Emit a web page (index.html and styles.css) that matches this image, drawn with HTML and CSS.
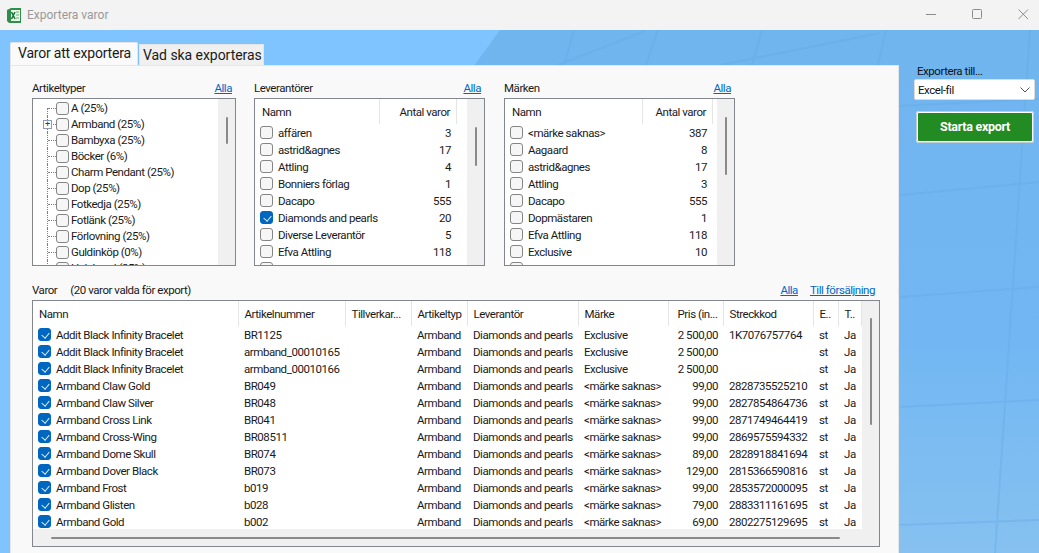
FILE: index.html
```html
<!DOCTYPE html>
<html lang="sv">
<head>
<meta charset="utf-8">
<title>Exportera varor</title>
<link rel="stylesheet" href="styles.css">
</head>
<body>
<div class="window">
  <svg class="wallpaper" width="1039" height="553" viewBox="0 0 1039 553" aria-hidden="true">
    <defs>
      <linearGradient id="wr" x1="0" y1="0" x2="0" y2="1"><stop offset="0" stop-color="#70b5ee"/><stop offset=".6" stop-color="#72b7f3"/><stop offset="1" stop-color="#86c1f0"/></linearGradient>
    </defs>
    <rect width="1039" height="553" fill="#80c4ff"/>
    <polygon points="500,30 1039,30 1039,553 120,553" fill="url(#wr)"/>
    <g class="wl">
      <path d="M574 30L564 65M658 30L646 65M762 30L752 65M886 30L878 65M645 31L558 65M880 33L721 65"/>
      <path d="M1030 30L995 553M900 106L1039 99M900 195L1039 182M900 297L1039 287M900 407L1039 400M900 525L1039 520"/>
    </g>
  </svg>

  <header class="titlebar">
    <svg class="app-icon" width="16" height="17" viewBox="0 0 16 17" aria-hidden="true">
      <path d="M1 3L5 1H15V16H3L1 14Z" fill="#2f8f4a"/>
      <rect x="5" y="3" width="9" height="11" fill="#eef6ee"/>
      <path d="M10 5h3M10 8h3M10 11h3" stroke="#8fc79f" stroke-width="1.5"/>
      <path d="M5.5 5L9 12M9 5L5.5 12" stroke="#1f7a3c" stroke-width="1.6"/>
    </svg>
    <span class="app-title">Exportera varor</span>
    <div class="win-controls">
      <svg width="11" height="11" viewBox="0 0 11 11" aria-hidden="true"><path d="M0 5.5H10" stroke="#8c8c8c"/></svg>
      <svg width="11" height="11" viewBox="0 0 11 11" aria-hidden="true"><rect x=".5" y=".5" width="9" height="9" rx="1" fill="none" stroke="#8c8c8c"/></svg>
      <svg width="11" height="11" viewBox="0 0 11 11" aria-hidden="true"><path d="M.5 .5L10 10M10 .5L.5 10" stroke="#8c8c8c"/></svg>
    </div>
  </header>

  <div class="content">
    <main class="main">
      <nav class="tabs">
        <span class="tab tab-active">Varor att exportera</span>
        <span class="tab">Vad ska exporteras</span>
      </nav>
      <section class="panel">
        <div class="filters">
          <div class="group g-types">
            <div class="group-head"><span>Artikeltyper</span><a class="link">Alla</a></div>
            <div class="box tree-box">
              <ul class="tree">
                <li><span class="branch first"></span><span class="cb"></span><span>A (25%)</span></li>
                <li><span class="branch"><span class="plus">+</span></span><span class="cb"></span><span>Armband (25%)</span></li>
                <li><span class="branch"></span><span class="cb"></span><span>Bambyxa (25%)</span></li>
                <li><span class="branch"></span><span class="cb"></span><span>Böcker (6%)</span></li>
                <li><span class="branch"></span><span class="cb"></span><span>Charm Pendant (25%)</span></li>
                <li><span class="branch"></span><span class="cb"></span><span>Dop (25%)</span></li>
                <li><span class="branch"></span><span class="cb"></span><span>Fotkedja (25%)</span></li>
                <li><span class="branch"></span><span class="cb"></span><span>Fotlänk (25%)</span></li>
                <li><span class="branch"></span><span class="cb"></span><span>Förlovning (25%)</span></li>
                <li><span class="branch"></span><span class="cb"></span><span>Guldinköp (0%)</span></li>
                <li><span class="branch"></span><span class="cb"></span><span>Halsband (25%)</span></li>
              </ul>
              <div class="vscroll"><span class="thumb th-tree"></span></div>
            </div>
          </div>

          <div class="group g-list">
            <div class="group-head"><span>Leverantörer</span><a class="link">Alla</a></div>
            <div class="box">
              <div class="list">
                <div class="list-head"><span class="lh-name">Namn</span><span class="lh-count">Antal varor</span></div>
                <div class="list-row"><span class="cb"></span><span class="ln">affären</span><span class="lc">3</span></div>
                <div class="list-row"><span class="cb"></span><span class="ln">astrid&amp;agnes</span><span class="lc">17</span></div>
                <div class="list-row"><span class="cb"></span><span class="ln">Attling</span><span class="lc">4</span></div>
                <div class="list-row"><span class="cb"></span><span class="ln">Bonniers förlag</span><span class="lc">1</span></div>
                <div class="list-row"><span class="cb"></span><span class="ln">Dacapo</span><span class="lc">555</span></div>
                <div class="list-row"><span class="cb on"></span><span class="ln">Diamonds and pearls</span><span class="lc">20</span></div>
                <div class="list-row"><span class="cb"></span><span class="ln">Diverse Leverantör</span><span class="lc">5</span></div>
                <div class="list-row"><span class="cb"></span><span class="ln">Efva Attling</span><span class="lc">118</span></div>
                <div class="list-row"><span class="cb"></span></div>
              </div>
              <div class="vscroll"><span class="thumb th-lev"></span></div>
            </div>
          </div>

          <div class="group g-list">
            <div class="group-head"><span>Märken</span><a class="link">Alla</a></div>
            <div class="box">
              <div class="list list-wide">
                <div class="list-head"><span class="lh-name">Namn</span><span class="lh-count">Antal varor</span></div>
                <div class="list-row"><span class="cb"></span><span class="ln">&lt;märke saknas&gt;</span><span class="lc">387</span></div>
                <div class="list-row"><span class="cb"></span><span class="ln">Aagaard</span><span class="lc">8</span></div>
                <div class="list-row"><span class="cb"></span><span class="ln">astrid&amp;agnes</span><span class="lc">17</span></div>
                <div class="list-row"><span class="cb"></span><span class="ln">Attling</span><span class="lc">3</span></div>
                <div class="list-row"><span class="cb"></span><span class="ln">Dacapo</span><span class="lc">555</span></div>
                <div class="list-row"><span class="cb"></span><span class="ln">Dopmästaren</span><span class="lc">1</span></div>
                <div class="list-row"><span class="cb"></span><span class="ln">Efva Attling</span><span class="lc">118</span></div>
                <div class="list-row"><span class="cb"></span><span class="ln">Exclusive</span><span class="lc">10</span></div>
                <div class="list-row"><span class="cb"></span></div>
              </div>
              <div class="vscroll"><span class="thumb th-mar"></span></div>
            </div>
          </div>
        </div>

        <div class="group-head products-head">
          <span class="ph-left"><span>Varor</span><span>(20 varor valda för export)</span></span>
          <span class="ph-links"><a class="link">Alla</a><a class="link">Till försäljning</a></span>
        </div>
        <div class="box table-box">
          <div class="table-top">
            <div class="table-clip">
              <table class="products">
                <colgroup>
                  <col class="c1"><col class="c2"><col class="c3"><col class="c4"><col class="c5"><col class="c6"><col class="c7"><col class="c8"><col class="c9"><col class="c10">
                </colgroup>
                <thead>
                  <tr><th>Namn</th><th>Artikelnummer</th><th>Tillverkar...</th><th>Artikeltyp</th><th>Leverantör</th><th>Märke</th><th class="num">Pris (in...</th><th>Streckkod</th><th>E..</th><th>T..</th></tr>
                </thead>
                <tbody>
                  <tr><td><span class="cb on"></span>Addit Black Infinity Bracelet</td><td>BR1125</td><td></td><td>Armband</td><td>Diamonds and pearls</td><td>Exclusive</td><td class="num">2 500,00</td><td>1K7076757764</td><td>st</td><td>Ja</td></tr>
                  <tr><td><span class="cb on"></span>Addit Black Infinity Bracelet</td><td>armband_00010165</td><td></td><td>Armband</td><td>Diamonds and pearls</td><td>Exclusive</td><td class="num">2 500,00</td><td></td><td>st</td><td>Ja</td></tr>
                  <tr><td><span class="cb on"></span>Addit Black Infinity Bracelet</td><td>armband_00010166</td><td></td><td>Armband</td><td>Diamonds and pearls</td><td>Exclusive</td><td class="num">2 500,00</td><td></td><td>st</td><td>Ja</td></tr>
                  <tr><td><span class="cb on"></span>Armband Claw Gold</td><td>BR049</td><td></td><td>Armband</td><td>Diamonds and pearls</td><td>&lt;märke saknas&gt;</td><td class="num">99,00</td><td>2828735525210</td><td>st</td><td>Ja</td></tr>
                  <tr><td><span class="cb on"></span>Armband Claw Silver</td><td>BR048</td><td></td><td>Armband</td><td>Diamonds and pearls</td><td>&lt;märke saknas&gt;</td><td class="num">99,00</td><td>2827854864736</td><td>st</td><td>Ja</td></tr>
                  <tr><td><span class="cb on"></span>Armband Cross Link</td><td>BR041</td><td></td><td>Armband</td><td>Diamonds and pearls</td><td>&lt;märke saknas&gt;</td><td class="num">99,00</td><td>2871749464419</td><td>st</td><td>Ja</td></tr>
                  <tr><td><span class="cb on"></span>Armband Cross-Wing</td><td>BR08511</td><td></td><td>Armband</td><td>Diamonds and pearls</td><td>&lt;märke saknas&gt;</td><td class="num">99,00</td><td>2869575594332</td><td>st</td><td>Ja</td></tr>
                  <tr><td><span class="cb on"></span>Armband Dome Skull</td><td>BR074</td><td></td><td>Armband</td><td>Diamonds and pearls</td><td>&lt;märke saknas&gt;</td><td class="num">89,00</td><td>2828918841694</td><td>st</td><td>Ja</td></tr>
                  <tr><td><span class="cb on"></span>Armband Dover Black</td><td>BR073</td><td></td><td>Armband</td><td>Diamonds and pearls</td><td>&lt;märke saknas&gt;</td><td class="num">129,00</td><td>2815366590816</td><td>st</td><td>Ja</td></tr>
                  <tr><td><span class="cb on"></span>Armband Frost</td><td>b019</td><td></td><td>Armband</td><td>Diamonds and pearls</td><td>&lt;märke saknas&gt;</td><td class="num">99,00</td><td>2853572000095</td><td>st</td><td>Ja</td></tr>
                  <tr><td><span class="cb on"></span>Armband Glisten</td><td>b028</td><td></td><td>Armband</td><td>Diamonds and pearls</td><td>&lt;märke saknas&gt;</td><td class="num">79,00</td><td>2883311161695</td><td>st</td><td>Ja</td></tr>
                  <tr><td><span class="cb on"></span>Armband Gold</td><td>b002</td><td></td><td>Armband</td><td>Diamonds and pearls</td><td>&lt;märke saknas&gt;</td><td class="num">69,00</td><td>2802275129695</td><td>st</td><td>Ja</td></tr>
                </tbody>
              </table>
            </div>
            <div class="vscroll"><span class="thumb th-table"></span></div>
          </div>
          <div class="hscroll"><span class="hthumb"></span></div>
        </div>
      </section>
    </main>

    <aside class="side">
      <div class="side-label">Exportera till...</div>
      <div class="combo"><span>Excel-fil</span>
        <svg width="10" height="6" viewBox="0 0 10 6" aria-hidden="true"><path d="M.5 .5L5 5L9.5 .5" fill="none" stroke="#555"/></svg>
      </div>
      <div class="start-btn">Starta export</div>
    </aside>
  </div>
</div>
</body>
</html>
```
FILE: styles.css
```css
* { box-sizing: border-box; }
html, body { margin: 0; padding: 0; }
body {
  font-family: "Roboto", "Liberation Sans", sans-serif;
  font-size: 11.5px;
  letter-spacing: -.45px;
  color: #1a1a1a;
  background: #80c4ff;
}
.window {
  position: relative;
  width: 1039px;
  height: 553px;
  overflow: hidden;
  display: flex;
  flex-direction: column;
}
.wallpaper { position: absolute; left: 0; top: 0; }
.wl path { fill: none; stroke: #66abe6; stroke-opacity: .4; stroke-width: 2; }

.titlebar {
  position: relative;
  height: 30px;
  flex: none;
  background: #f3f3f3;
  display: flex;
  align-items: center;
  padding-left: 6px;
}
.app-icon { flex: none; margin-right: 5px; }
.app-title { font-size: 12px; color: #999; letter-spacing: 0; }
.win-controls {
  margin-left: auto;
  display: flex;
  gap: 35px;
  padding-right: 10px;
  margin-top: -2px;
}

.content { position: relative; flex: 1; display: flex; min-height: 0; }
.main { width: 899px; flex: none; padding: 12px 0 0 10px; display: flex; flex-direction: column; }

.tabs { display: flex; height: 23px; align-items: flex-end; flex: none; }
.tab {
  height: 21px;
  width: 125px;
  margin-left: 1px;
  padding-left: 3px;
  background: #f0f0f0;
  border: 1px solid #e4e4e4;
  border-bottom: 0;
  font-size: 14px;
  line-height: 20px;
  letter-spacing: -.05px;
  white-space: nowrap;
  color: #1a1a1a;
}
.tab-active {
  height: 23px;
  width: 128px;
  margin-left: 0;
  padding-left: 7px;
  background: #fafafa;
  line-height: 21px;
  letter-spacing: -.2px;
  border-radius: 2px 2px 0 0;
}

.panel {
  flex: 1;
  background: #f9f9f9;
  border: 1px solid #e6e6e6;
  border-bottom: 0;
  padding: 15px 0 0 21px;
}
.filters { display: flex; gap: 18px; }
.group-head {
  height: 17px;
  line-height: 15px;
  display: flex;
  justify-content: space-between;
  align-items: flex-start;
  padding-right: 4px;
  white-space: nowrap;
}
.g-types { width: 204px; }
.g-list { width: 231px; }
.g-list + .g-list { margin-left: 1px; }
.link { color: #0066cc; text-decoration: underline; }

.box {
  display: flex;
  height: 168px;
  background: #fff;
  border: 1px solid #82878f;
  overflow: hidden;
}
.vscroll {
  flex: none;
  width: 17px;
  background: #f0f0f0;
  display: flex;
  justify-content: center;
  align-items: flex-start;
}
.thumb { display: block; width: 2px; background: #8a8a8a; border-radius: 1px; }
.th-tree { height: 27px; margin-top: 18px; }
.th-lev { height: 39px; margin-top: 28px; }
.th-mar { height: 58px; margin-top: 18px; }
.th-table { height: 107px; margin-top: 17px; }

.cb {
  display: inline-block;
  flex: none;
  width: 13px;
  height: 13px;
  background: #f6f6f6;
  border: 1px solid #858585;
  border-radius: 3px;
}
.cb.on { background: #0067c0; border-color: #0067c0; position: relative; }
.cb.on::after {
  content: "";
  position: absolute;
  left: 3.5px;
  top: 2px;
  width: 4px;
  height: 6px;
  border: solid #dcebf8;
  border-width: 0 1px 1px 0;
  transform: rotate(40deg);
}

.tree { flex: 1; margin: 0; padding: 1px 0 0; list-style: none; min-width: 0; }
.tree li { height: 16px; display: flex; align-items: center; white-space: nowrap; }
.tree .cb { margin-right: 2px; }
.branch {
  position: relative;
  flex: none;
  width: 9px;
  height: 16px;
  margin-left: 14px;
  border-left: 1px dotted #808080;
}
.branch::after { content: ""; display: block; height: 8px; border-bottom: 1px dotted #808080; }
.branch.first { height: 8px; align-self: flex-end; }
.branch.first::after { height: 0; }
.plus {
  position: absolute;
  left: -5px;
  top: 4px;
  width: 9px;
  height: 9px;
  background: #fff;
  border: 1px solid #8e9db5;
  color: #1f3a7a;
  font-size: 9px;
  line-height: 7px;
  letter-spacing: 0;
  text-align: center;
}

.list { flex: 1; min-width: 0; }
.list-head { height: 25px; display: flex; align-items: center; }
.lh-name { width: 125px; height: 25px; line-height: 27px; padding-left: 7px; border-right: 1px solid #e5e5e5; }
.lh-count { width: 77px; height: 25px; line-height: 27px; text-align: right; padding-right: 6px; border-right: 1px solid #e5e5e5; }
.list-row { height: 17px; display: flex; align-items: center; padding-left: 5px; white-space: nowrap; }
.ln { flex: none; width: 134px; margin-left: 5px; overflow: hidden; }
.lc { width: 39px; text-align: right; }
.list-wide .lh-name { width: 138px; }
.list-wide .lh-count { width: 70px; }
.list-wide .ln { width: 140px; }

.products-head { width: 848px; margin-top: 17px; padding-right: 5px; }
.ph-left { display: flex; gap: 13px; }
.ph-links { display: flex; gap: 12px; }

.table-box { width: 848px; height: 247px; flex-direction: column; }
.table-top { flex: none; height: 228px; display: flex; }
.table-clip { flex: 1; min-width: 0; overflow: hidden; }
.hscroll { flex: none; height: 17px; background: #f0f0f0; padding: 8px 0 0 18px; }
.hthumb { display: block; width: 789px; height: 2px; background: #8a8a8a; border-radius: 1px; }

.products { table-layout: fixed; width: 828px; border-collapse: collapse; }
.c1 { width: 205px; } .c2 { width: 107px; } .c3 { width: 66px; } .c4 { width: 56px; }
.c5 { width: 111px; } .c6 { width: 90px; } .c7 { width: 55px; } .c8 { width: 90px; }
.c9 { width: 25px; } .c10 { width: 23px; }
.products th {
  height: 25px;
  padding: 0 0 0 6px;
  font-weight: 400;
  text-align: left;
  white-space: nowrap;
  overflow: hidden;
  border-right: 1px solid #e5e5e5;
}
.products td {
  height: 17px;
  padding: 0 0 0 6px;
  white-space: nowrap;
  overflow: hidden;
}
.products td:first-child { padding-left: 5px; }
.products td .cb { vertical-align: -2.5px; margin-right: 5px; }
.products .num { text-align: right; padding: 0 5px 0 0; }

.side { flex: 1; position: relative; padding: 33px 0 0 15px; }
.side-label { height: 16px; line-height: 16px; padding-left: 3px; color: #111; }
.combo {
  width: 121px;
  height: 21px;
  background: #fff;
  border: 1px solid #dcdcdc;
  border-radius: 2px;
  display: flex;
  align-items: center;
  justify-content: space-between;
  padding: 0 4px 0 3px;
  color: #111;
}
.start-btn {
  width: 118px;
  height: 32px;
  margin: 11px 0 0 2px;
  background: #228b22;
  border: 2px solid #fff;
  outline: 1px solid #c4cdd6;
  outline-offset: -1px;
  border-radius: 3px;
  color: #fff;
  font-weight: 700;
  font-size: 12.5px;
  letter-spacing: -.3px;
  line-height: 28px;
  text-align: center;
}
```
